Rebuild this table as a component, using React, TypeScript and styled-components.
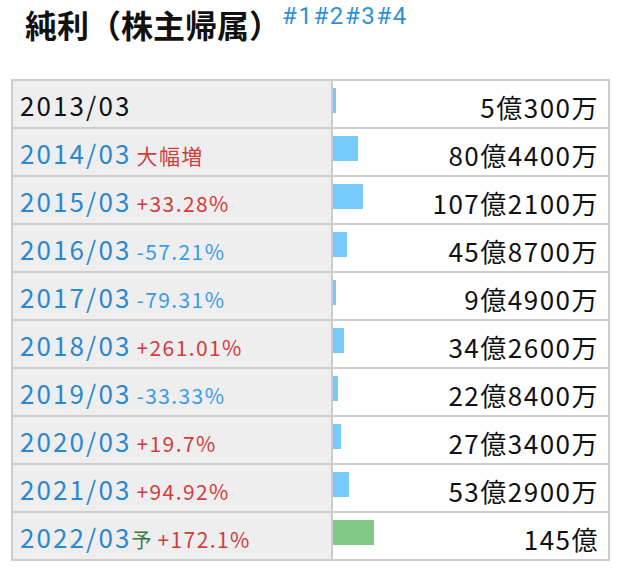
import React from "react";
import styled, { createGlobalStyle } from "styled-components";

const Global = createGlobalStyle`
  html, body { margin: 0; padding: 0; background: #fff; }
  body { font-family: "Noto Sans CJK JP", "Noto Sans", sans-serif; }
`;

const Page = styled.div`
  width: 622px;
  height: 576px;
  overflow: hidden;
  background: #fff;
`;

const Header = styled.div`
  display: flex;
  align-items: flex-start;
  padding: 0 0 0 25px;
  height: 79px;
  box-sizing: border-box;
`;

const Title = styled.h2`
  margin: 2px 0 0 0;
  font-size: 32px;
  font-weight: 700;
  color: #111;
  line-height: 44px;
  white-space: nowrap;
`;

const Links = styled.div`
  margin-left: 1px;
  padding-top: 2px;
  font-family: Roboto, "Noto Sans", sans-serif;
  font-size: 24px;
  line-height: normal;
  letter-spacing: 1.6px;
  color: #2f8fd9;
  white-space: nowrap;
`;

const LinkItem = styled.span`
  cursor: pointer;
`;

const Table = styled.div`
  margin-left: 11px;
  width: 599px;
  border: 2px solid #ccc;
  box-sizing: border-box;
  display: flex;
  flex-direction: column;
  gap: 2px;
  background: #ccc;
`;

const Row = styled.div`
  display: grid;
  grid-template-columns: 318px 1fr;
  column-gap: 2px;
  height: 46px;
`;

const LabelCell = styled.div`
  background: #eee;
  display: flex;
  align-items: center;
  padding: 6px 0 0 7px;
  box-sizing: border-box;
`;

const LabelText = styled.div`
  white-space: nowrap;
  line-height: 34px;
`;

const Date = styled.span<{ $first?: boolean }>`
  font-size: 26px;
  letter-spacing: 2.1px;
  color: ${(p) => (p.$first ? "#111" : "#2a88d0")};
`;

const Change = styled.span<{ $tone: "up" | "down" }>`
  font-size: 21px;
  letter-spacing: 1.4px;
  margin-left: 5px;
  color: ${(p) => (p.$tone === "up" ? "#d23c3c" : "#3a9be8")};
`;

const Forecast = styled.span`
  font-size: 20px;
  color: #2e7d45;
  margin-left: 0;
  & + span {
    margin-left: 6px;
  }
`;

const ValueCell = styled.div`
  background: #fff;
  position: relative;
  display: flex;
  align-items: center;
  justify-content: flex-end;
  padding: 6px 9px 0 0;
  box-sizing: border-box;
`;

const Bar = styled.div<{ $forecast?: boolean }>`
  position: absolute;
  left: 0;
  top: 7px;
  height: 25px;
  background: ${(p) => (p.$forecast ? "#82c886" : "#78cbfd")};
`;

const Value = styled.span`
  font-size: 26px;
  letter-spacing: 1.5px;
  line-height: 34px;
  color: #111;
  white-space: nowrap;
`;

type RowData = {
  date: string;
  change?: string;
  tone?: "up" | "down";
  value: string;
  bar: number;
  forecast?: boolean;
};

const rows: RowData[] = [
  { date: "2013/03", value: "5億300万", bar: 3 },
  { date: "2014/03", change: "大幅増", tone: "up", value: "80億4400万", bar: 25 },
  { date: "2015/03", change: "+33.28%", tone: "up", value: "107億2100万", bar: 30 },
  { date: "2016/03", change: "-57.21%", tone: "down", value: "45億8700万", bar: 14 },
  { date: "2017/03", change: "-79.31%", tone: "down", value: "9億4900万", bar: 3 },
  { date: "2018/03", change: "+261.01%", tone: "up", value: "34億2600万", bar: 11 },
  { date: "2019/03", change: "-33.33%", tone: "down", value: "22億8400万", bar: 5 },
  { date: "2020/03", change: "+19.7%", tone: "up", value: "27億3400万", bar: 8 },
  { date: "2021/03", change: "+94.92%", tone: "up", value: "53億2900万", bar: 16 },
  { date: "2022/03", change: "+172.1%", tone: "up", value: "145億", bar: 41, forecast: true },
];

export default function App() {
  return (
    <Page>
      <Global />
      <Header>
        <Title>純利（株主帰属）</Title>
        <Links>
          <LinkItem>#1</LinkItem>
          <LinkItem>#2</LinkItem>
          <LinkItem>#3</LinkItem>
          <LinkItem>#4</LinkItem>
        </Links>
      </Header>
      <Table>
        {rows.map((r, i) => (
          <Row key={r.date}>
            <LabelCell>
              <LabelText>
                <Date $first={i === 0}>{r.date}</Date>
                {r.forecast && <Forecast>予</Forecast>}
                {r.change && <Change $tone={r.tone ?? "up"}>{r.change}</Change>}
              </LabelText>
            </LabelCell>
            <ValueCell>
              <Bar $forecast={r.forecast} style={{ width: `${r.bar}px` }} />
              <Value>{r.value}</Value>
            </ValueCell>
          </Row>
        ))}
      </Table>
    </Page>
  );
}
